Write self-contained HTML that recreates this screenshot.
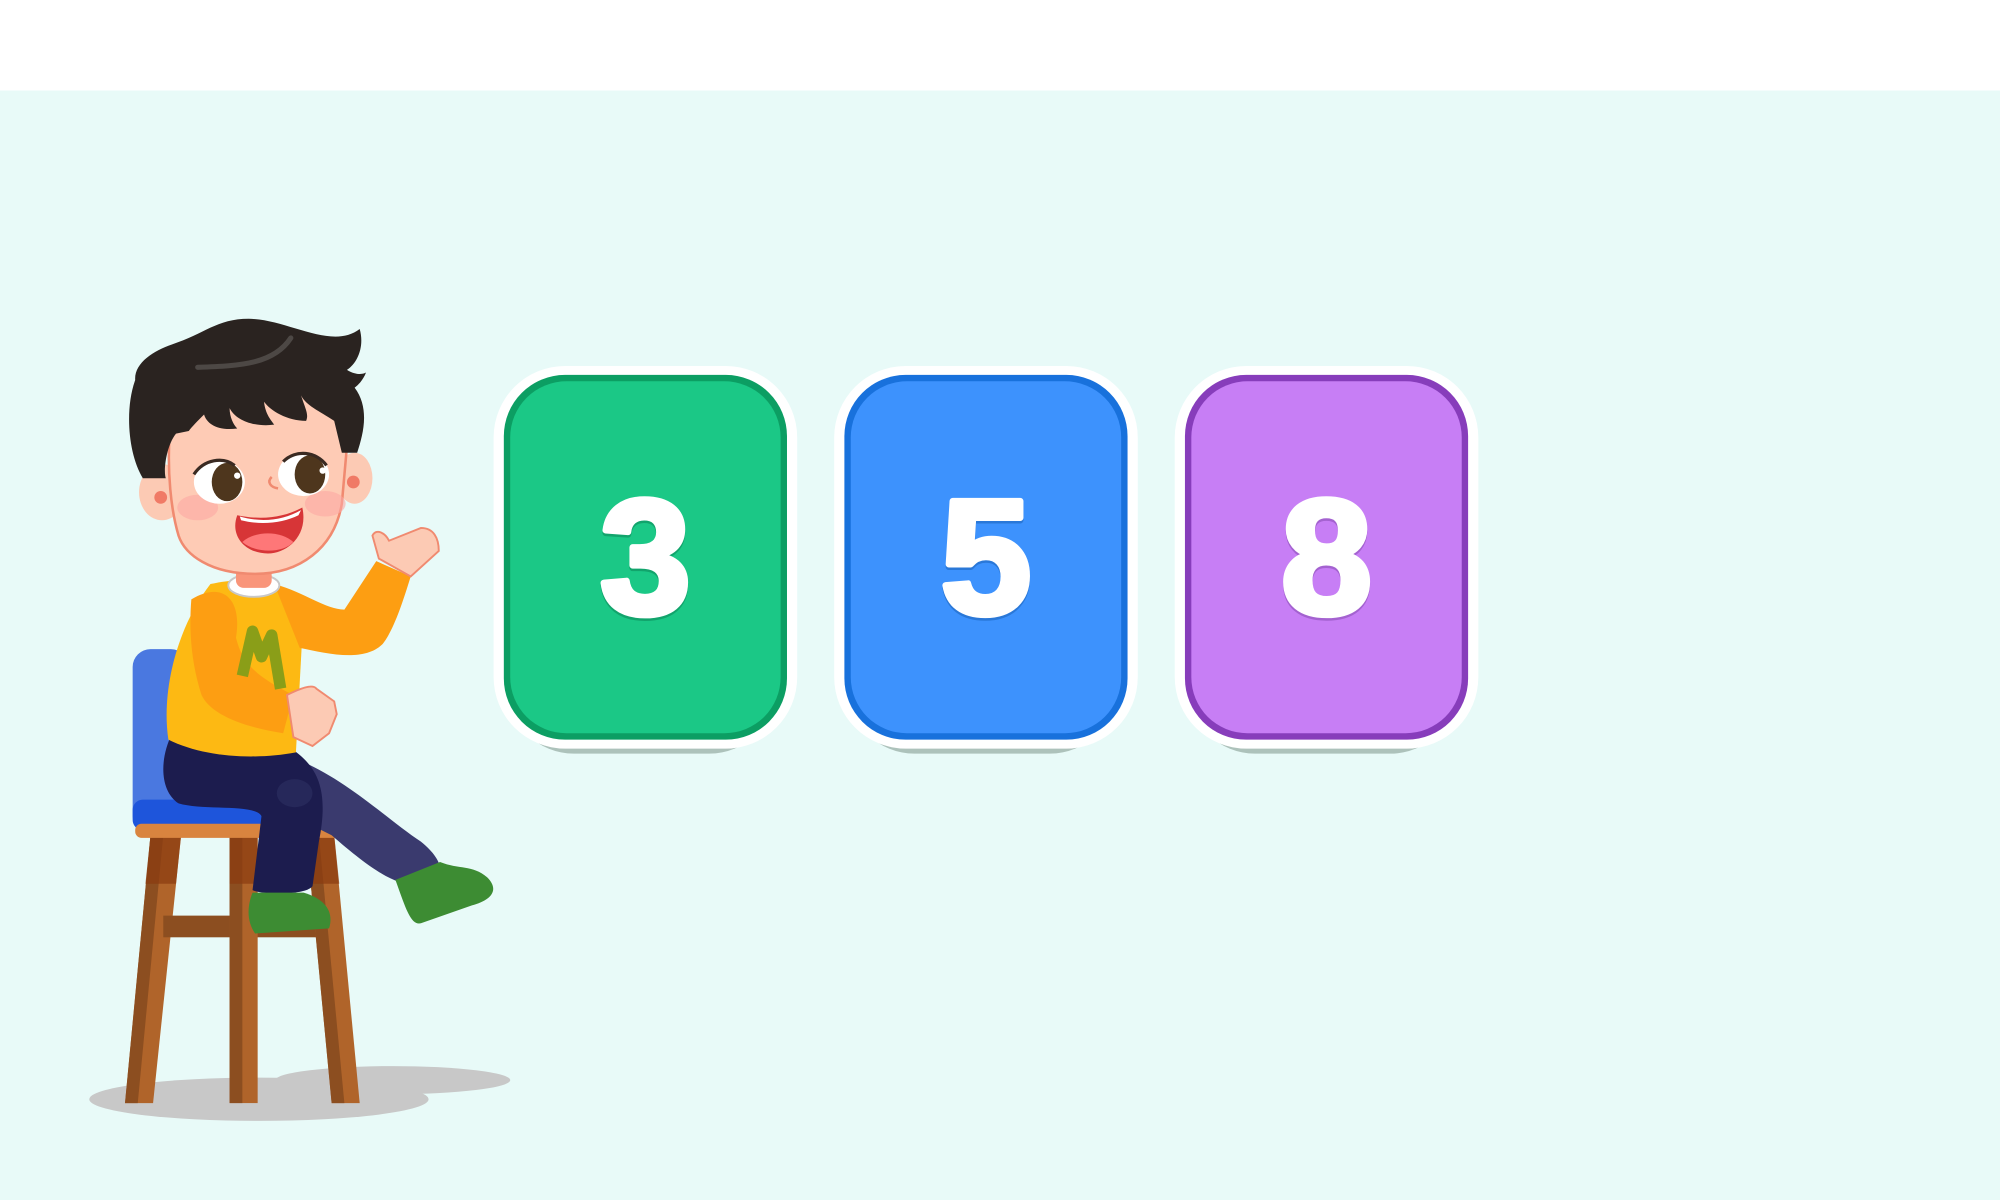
<!DOCTYPE html>
<html><head><meta charset="utf-8"><style>
html,body{margin:0;padding:0;width:2000px;height:1200px;overflow:hidden;background:#e8faf8}
svg{display:block}
</style></head><body>
<svg width="2000" height="1200" viewBox="0 0 1568 941" preserveAspectRatio="none">
<rect x="0" y="0" width="1568" height="941" fill="#e8faf8"/>
<rect x="0" y="0" width="1568" height="71" fill="#fff"/>

<!-- cards -->
<g>
 <rect x="398" y="296" width="210" height="295" rx="52" fill="#adc2bb"/>
 <rect x="387" y="287" width="238" height="300" rx="56" fill="#fff"/>
 <rect x="395" y="294" width="222" height="286" rx="48" fill="#0c9e63"/>
 <rect x="400" y="299" width="212" height="276" rx="44" fill="#1bc886"/>
 <text x="506" y="483" text-anchor="middle" font-family="Liberation Sans, sans-serif" font-weight="bold" font-size="128" fill="#12a46c" stroke="#12a46c" stroke-width="5" stroke-linejoin="round">3</text>
 <text x="506" y="481" text-anchor="middle" font-family="Liberation Sans, sans-serif" font-weight="bold" font-size="128" fill="#fff" stroke="#fff" stroke-width="5" stroke-linejoin="round">3</text>
</g>
<g>
 <rect x="665" y="296" width="210" height="295" rx="52" fill="#adc2bb"/>
 <rect x="654" y="287" width="238" height="300" rx="56" fill="#fff"/>
 <rect x="662" y="294" width="222" height="286" rx="48" fill="#1871dc"/>
 <rect x="667" y="299" width="212" height="276" rx="44" fill="#3d92fd"/>
 <text x="773" y="483" text-anchor="middle" font-family="Liberation Sans, sans-serif" font-weight="bold" font-size="128" fill="#2a78d8" stroke="#2a78d8" stroke-width="5" stroke-linejoin="round">5</text>
 <text x="773" y="481" text-anchor="middle" font-family="Liberation Sans, sans-serif" font-weight="bold" font-size="128" fill="#fff" stroke="#fff" stroke-width="5" stroke-linejoin="round">5</text>
</g>
<g>
 <rect x="932" y="296" width="210" height="295" rx="52" fill="#adc2bb"/>
 <rect x="921" y="287" width="238" height="300" rx="56" fill="#fff"/>
 <rect x="929" y="294" width="222" height="286" rx="48" fill="#873dbb"/>
 <rect x="934" y="299" width="212" height="276" rx="44" fill="#c77ef5"/>
 <text x="1040" y="483" text-anchor="middle" font-family="Liberation Sans, sans-serif" font-weight="bold" font-size="128" fill="#a462d0" stroke="#a462d0" stroke-width="5" stroke-linejoin="round">8</text>
 <text x="1040" y="481" text-anchor="middle" font-family="Liberation Sans, sans-serif" font-weight="bold" font-size="128" fill="#fff" stroke="#fff" stroke-width="5" stroke-linejoin="round">8</text>
</g>

<!-- shadows -->
<ellipse cx="203" cy="862" rx="133" ry="17" fill="#c8c8c8"/>
<ellipse cx="308" cy="847" rx="92" ry="11" fill="#c8c8c8"/>

<!-- chair -->
<rect x="104" y="509" width="44" height="145" rx="14" fill="#4a78e0"/>
<polygon points="118,655 142,655 120,865 98,865" fill="#b0642a"/>
<polygon points="118,655 128,655 108,865 98,865" fill="#8c4e20"/>
<rect x="128" y="718" width="124" height="17" fill="#8c4e20"/>
<rect x="180" y="655" width="22" height="210" fill="#b0642a"/>
<rect x="180" y="655" width="10" height="210" fill="#8c4e20"/>
<polygon points="240,655 262,655 282,865 260,865" fill="#b0642a"/>
<polygon points="240,655 250,655 270,865 260,865" fill="#8c4e20"/>
<polygon points="118,655 142,655 138,693 114,693" fill="#8a3a10" opacity="0.7"/>
<rect x="180" y="655" width="22" height="38" fill="#8a3a10" opacity="0.7"/>
<polygon points="240,655 262,655 266,693 244,693" fill="#8a3a10" opacity="0.7"/>
<rect x="104" y="627" width="170" height="24" rx="8" fill="#1e55db"/>
<rect x="106" y="646" width="166" height="11" rx="5" fill="#d9843f"/>

<!-- pants -->
<path d="M215,590 C260,600 300,640 330,660 C345,672 350,685 340,690 C320,700 300,690 260,655 L210,630 Z" fill="#3a3a6e"/>
<path d="M135,575 L225,585 C250,600 258,620 250,660 L245,695 C240,702 205,702 198,698 L205,640 C200,630 160,636 140,630 C125,620 125,595 135,575 Z" fill="#1c1c4e"/>
<ellipse cx="231" cy="622" rx="14" ry="11" fill="#26285a"/>
<!-- shoes -->
<path d="M198,700 L238,700 C255,705 262,715 258,728 L200,732 C193,722 194,710 198,700 Z" fill="#3d8c33"/>
<path d="M310,690 L345,676 C360,682 370,678 382,688 C392,698 385,706 370,710 L330,724 C322,726 318,712 310,690 Z" fill="#3d8c33"/>

<!-- torso -->
<path d="M165,458 C200,450 230,458 238,480 L232,590 C200,596 160,594 132,580 C126,540 140,490 165,458 Z" fill="#fdb913"/>
<path d="M150,470 C175,455 190,470 185,500 C190,520 200,530 230,545 L222,575 C190,570 165,560 158,545 C150,520 148,495 150,470 Z" fill="#fd9e12"/>
<path d="M190,530 L198,495 L205,515 L213,498 L220,540" stroke="#8a9e18" stroke-width="9" fill="none" stroke-linejoin="round"/>
<path d="M215,458 C240,465 255,478 270,478 L295,440 L322,452 C315,475 308,495 300,505 C285,520 255,512 235,508 Z" fill="#fd9e12"/>
<!-- hands -->
<path d="M225,545 C235,540 245,536 248,540 L262,550 L264,560 L258,575 L245,585 L230,578 Z" fill="#fccab4" stroke="#f08a70" stroke-width="1.5"/>
<path d="M297,438 L292,420 C295,414 302,418 305,424 L330,414 C340,414 344,422 344,432 L322,452 Z" fill="#fccab4" stroke="#f08a70" stroke-width="1.5"/>
<!-- neck -->
<ellipse cx="199" cy="459" rx="20" ry="9" fill="#fff" stroke="#c8c8c8" stroke-width="1.5"/>
<rect x="185" y="445" width="28" height="16" rx="6" fill="#f9957a"/>

<!-- head -->
<ellipse cx="127" cy="386" rx="18" ry="22" fill="#fccab4"/>
<ellipse cx="278" cy="375" rx="14" ry="20" fill="#fccab4"/>
<circle cx="126" cy="390" r="5" fill="#f07a66"/>
<circle cx="277" cy="378" r="5" fill="#f07a66"/>
<path d="M133,340 C135,310 165,300 200,302 C240,302 270,315 272,350 L268,395 C262,430 235,450 200,450 C165,450 145,435 140,420 C134,400 131,370 133,340 Z" fill="#fecbb5" stroke="#f08a70" stroke-width="2"/>
<ellipse cx="155" cy="398" rx="16" ry="10" fill="#fca9a4" opacity="0.6"/>
<ellipse cx="255" cy="395" rx="16" ry="10" fill="#fca9a4" opacity="0.6"/>
<!-- hair -->
<path d="M112,375 C100,355 98,320 106,298 C105,285 120,275 135,270 C160,262 170,250 195,250 C225,250 260,275 282,258 C286,272 280,285 272,290 C280,295 286,293 287,292 C284,300 278,304 278,304 C290,320 285,340 280,355 L268,355 L262,330 C250,322 240,318 236,310 C240,322 242,325 240,330 C225,330 212,322 207,315 C208,325 213,330 215,333 C200,335 185,330 180,320 C180,327 183,333 186,336 C170,338 162,332 160,325 C155,330 150,335 148,338 L138,340 C130,350 128,370 130,375 Z" fill="#2a2320"/>
<path d="M155,288 C190,287 215,285 228,265" stroke="#4d4845" stroke-width="4" fill="none" stroke-linecap="round"/>
<!-- eyes -->
<ellipse cx="172" cy="378" rx="20" ry="17" fill="#fff"/>
<ellipse cx="238" cy="372" rx="20" ry="17" fill="#fff"/>
<ellipse cx="178" cy="378" rx="12" ry="15" fill="#4e361d"/>
<ellipse cx="243" cy="372" rx="12" ry="15" fill="#4e361d"/>
<circle cx="186" cy="373" r="2.5" fill="#fff"/>
<circle cx="253" cy="369" r="2.5" fill="#fff"/>
<path d="M152,372 C160,360 175,358 184,365" stroke="#3a2a22" stroke-width="2.5" fill="none"/>
<path d="M222,362 C232,352 248,354 256,365" stroke="#3a2a22" stroke-width="2.5" fill="none"/>
<path d="M213,374 C209,378 212,382 218,383" stroke="#f08a70" stroke-width="2" fill="none"/>
<!-- mouth -->
<path d="M186,404 C205,408 222,406 237,398 C242,420 225,434 210,434 C192,434 180,420 186,404 Z" fill="#d73537"/>
<path d="M190,425 C200,416 220,416 230,425 C222,434 200,434 190,425 Z" fill="#fe7778"/>
<path d="M188,405 C205,410 222,408 236,400 L234,404 C222,410 205,412 189,408 Z" fill="#fff"/>
</svg>
</body></html>
